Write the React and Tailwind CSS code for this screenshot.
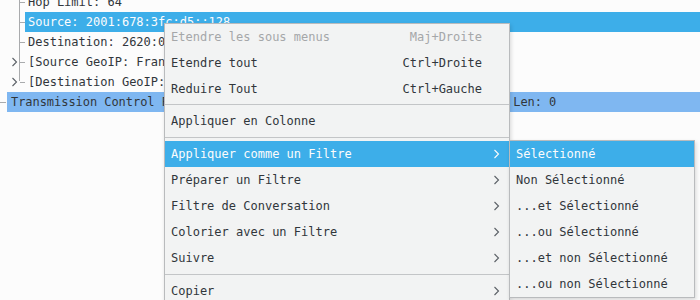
import React from 'react'

const mono = { fontFamily: '"DejaVu Sans Mono", "Liberation Mono", monospace' }

function Chevron({ className }) {
  return (
    <svg width="7" height="10" viewBox="0 0 7 10" className={className}>
      <path d="M1.5 1 L5.5 5 L1.5 9" fill="none" stroke="currentColor" strokeWidth="1.1" />
    </svg>
  )
}

function TreeRow({ children, selected, arrow, dash = true }) {
  return (
    <div className="relative h-[20px] flex items-center">
      {dash && <div className="absolute left-[20px] top-[10px] w-[5px] h-px bg-[#a9abad]" />}
      {arrow && (
        <Chevron className="absolute left-[11px] top-[5px] text-[#5b6066]" />
      )}
      <div
        className={`ml-[25px] flex-1 h-[20px] flex items-center pl-[3px] whitespace-pre ${
          selected ? 'bg-[#3daee9] text-[#fcfcfc]' : ''
        }`}
      >
        {children}
      </div>
    </div>
  )
}

function MenuItem({ label, shortcut, sub, active, disabled }) {
  return (
    <div
      className={`flex items-center h-[26px] pl-[6px] ${
        active ? 'bg-[#3daee9] text-[#fcfcfc]' : disabled ? 'text-[#a5a7a9]' : 'text-[#31363b]'
      }`}
    >
      <span className="flex-1 whitespace-pre">{label}</span>
      {shortcut && <span className="whitespace-pre">{shortcut}</span>}
      <span className="w-[27px] flex items-center pl-[11px]">
        {sub && <Chevron className={active ? 'text-[#fcfcfc]' : 'text-[#5b6066]'} />}
      </span>
    </div>
  )
}

function Sep({ top = 2, bottom = 3 }) {
  return (
    <div style={{ paddingTop: top, paddingBottom: bottom }}>
      <div className="h-px bg-[#c3c5c7]" />
    </div>
  )
}

export default function App() {
  return (
    <div
      className="relative w-[700px] h-[300px] overflow-hidden bg-[#fcfcfc] text-[12px] text-[#31363b]"
      style={mono}
    >
      {/* Packet details tree */}
      <div className="relative mt-[-8px]">
        <div className="absolute left-[19px] top-0 w-px h-[89px] bg-[#a9abad]" />
        <TreeRow>Hop Limit: 64</TreeRow>
        <TreeRow selected>Source: 2001:678:3fc:d5::128</TreeRow>
        <TreeRow>Destination: 2620:0:862:ed1a::1</TreeRow>
        <TreeRow arrow>[Source GeoIP: France]</TreeRow>
        <TreeRow arrow>[Destination GeoIP: United States]</TreeRow>
        <div className="relative h-[20px] flex items-center">
          <div className="absolute left-0 top-[10px] w-[6px] h-px bg-[#a9abad]" />
          <div className="ml-[7px] flex-1 h-[20px] flex items-center pl-[4px] bg-[#7fb7f1] whitespace-pre tracking-[-0.05px]">
            Transmission Control Protocol, Src Port: 443, Dst Port: 5123, Seq: 1, Len: 0
          </div>
        </div>
      </div>

      {/* Context menu */}
      <div className="absolute left-[164px] top-[23px] w-[346px] bg-[#f2f3f3] border border-[#b9bbbd] shadow-[1px_2px_4px_rgba(0,0,0,0.15)]">
        <MenuItem label="Etendre les sous menus" shortcut="Maj+Droite" disabled />
        <MenuItem label="Etendre tout" shortcut="Ctrl+Droite" />
        <MenuItem label="Reduire Tout" shortcut="Ctrl+Gauche" />
        <Sep top={2} bottom={3} />
        <MenuItem label="Appliquer en Colonne" />
        <Sep top={3} bottom={3} />
        <MenuItem label="Appliquer comme un Filtre" sub active />
        <MenuItem label="Préparer un Filtre" sub />
        <MenuItem label="Filtre de Conversation" sub />
        <MenuItem label="Colorier avec un Filtre" sub />
        <MenuItem label="Suivre" sub />
        <Sep top={3} bottom={3} />
        <MenuItem label="Copier" sub />
      </div>

      {/* Submenu */}
      <div className="absolute left-[509px] top-[140px] w-[186px] bg-[#f2f3f3] border border-[#b9bbbd] shadow-[1px_2px_4px_rgba(0,0,0,0.15)]">
        {[
          'Sélectionné',
          'Non Sélectionné',
          '...et Sélectionné',
          '...ou Sélectionné',
          '...et non Sélectionné',
          '...ou non Sélectionné',
        ].map((t, i) => (
          <div
            key={t}
            className={`h-[26px] flex items-center pl-[6px] whitespace-pre ${
              i === 0 ? 'bg-[#3daee9] text-[#fcfcfc]' : 'text-[#31363b]'
            }`}
          >
            {t}
          </div>
        ))}
      </div>
    </div>
  )
}
